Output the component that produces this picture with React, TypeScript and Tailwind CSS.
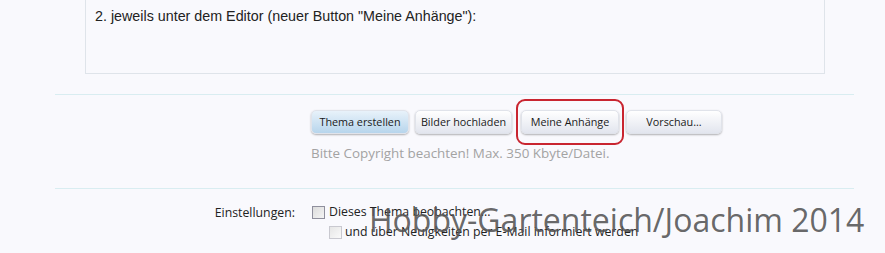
import React from "react";

function Btn({ children, primary, className = "" }: { children: React.ReactNode; primary?: boolean; className?: string }) {
  return (
    <button
      className={
        "h-[24px] rounded-[5px] text-[10.8px] text-[#1a1a1a] shadow-[0_1px_2px_rgba(0,0,0,0.3)] border border-[#e0e3ea] " +
        (primary
          ? "bg-gradient-to-b from-[#e8f2fa] to-[#b7d5ec] "
          : "bg-gradient-to-b from-[#ffffff] to-[#e2e5ee] ") +
        className
      }
      style={{ fontFamily: '"Open Sans", "Noto Sans", sans-serif' }}
    >
      {children}
    </button>
  );
}

export default function App() {
  const ui = { fontFamily: '"Open Sans", "Noto Sans", sans-serif' };
  return (
    <div className="relative w-[885px] h-[253px] overflow-hidden bg-[#f9f9fd]">
      {/* editor box */}
      <div className="ml-[85px] w-[740px] h-[75px] -mt-px border border-[#dfe4ea] bg-[#f9f9fd] pl-[9px] pt-[8px]">
        <p className="text-[14.3px] text-[#222] leading-[16px]" style={{ fontFamily: '"Liberation Sans", Arial, sans-serif' }}>
          2. jeweils unter dem Editor (neuer Button "Meine Anhänge"):
        </p>
      </div>

      <div className="ml-[55px] w-[799px] mt-[20px] h-px bg-[#d9edf1]" />

      <div className="pl-[311px] mt-[14px] flex items-center">
        <Btn primary className="w-[98px]">Thema erstellen</Btn>
        <Btn className="w-[97px] ml-[6px]">Bilder hochladen</Btn>
        <div className="ml-[4px] rounded-[9px] border-2 border-[#c92530] px-[3px] py-[9px] -my-[10px]">
          <Btn className="w-[98px] block">Meine Anhänge</Btn>
        </div>
        <Btn className="w-[96px] ml-[2px]">Vorschau...</Btn>
      </div>

      <p className="pl-[311px] mt-[10px] text-[13.4px] text-[#a3a3a3] leading-[17px]" style={ui}>
        Bitte Copyright beachten! Max. 350 Kbyte/Datei.
      </p>

      <div className="ml-[55px] w-[799px] mt-[26px] h-px bg-[#d9edf1]" />

      <div className="mt-[15px] flex text-[12.3px] text-[#222] leading-[16px]" style={ui}>
        <div className="w-[312px] text-right pr-[17px] pt-[1px]">Einstellungen:</div>
        <div>
          <label className="flex items-center">
            <span className="w-[13px] h-[13px] border border-[#8f8f9d] bg-gradient-to-br from-[#dcdcdc] to-[#f4f4f4] mr-[4px]" />
            Dieses Thema beobachten...
          </label>
          <label className="flex items-center ml-[17px] mt-[4px]">
            <span className="w-[13px] h-[13px] border border-[#c9c9d0] bg-gradient-to-br from-[#e6e6e6] to-[#fafafa] mr-[3px]" />
            und über Neuigkeiten per E-Mail informiert werden
          </label>
        </div>
      </div>

      <div
        className="absolute left-[369px] top-[200px] text-[32px] leading-[40px] text-[#555]/90 whitespace-nowrap pointer-events-none"
        style={ui}
      >
        Hobby-Gartenteich/Joachim 2014
      </div>
    </div>
  );
}
